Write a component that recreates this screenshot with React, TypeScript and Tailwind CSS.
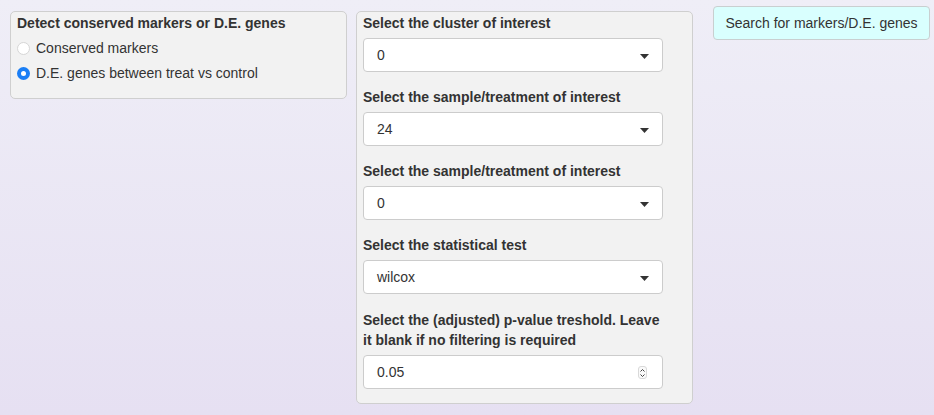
import React from "react";

const font = { fontFamily: '"Liberation Sans", Arial, sans-serif' };

const Caret = () => (
  <svg width="9" height="5" viewBox="0 0 9 5" className="absolute right-[13px] top-[15px]">
    <path d="M0 0 H9 L4.5 5 Z" fill="#333" />
  </svg>
);

const SelectBox = ({ value }: { value: string }) => (
  <div className="relative h-[34px] w-[300px] rounded-[4px] border border-[#cccccc] bg-white pl-[13px] text-[14px] leading-[32px] text-[#333]">
    {value}
    <Caret />
  </div>
);

const Field = ({ label, value }: { label: string; value: string }) => (
  <div className="mb-[15px]">
    <div className="mb-[5px] text-[14px] font-bold leading-5 text-[#333]">{label}</div>
    <SelectBox value={value} />
  </div>
);

const Radio = ({ checked, label }: { checked?: boolean; label: string }) => (
  <div className="flex h-[25px] items-center">
    {checked ? (
      <span className="flex h-[13px] w-[13px] items-center justify-center rounded-full bg-[#1a7ef5]">
        <span className="h-[5px] w-[5px] rounded-full bg-white" />
      </span>
    ) : (
      <span className="h-[13px] w-[13px] rounded-full border border-[#d6d6d6] bg-white" />
    )}
    <span className="ml-[6px] text-[14px] text-[#333]">{label}</span>
  </div>
);

export default function App() {
  return (
    <div
      style={font}
      className="min-h-[415px] w-full bg-gradient-to-b from-[#efeef7] to-[#e6e0f2] pl-[10px] pt-[6px]"
    >
      <div className="flex items-start">
        <div className="mt-[5px] h-[88px] w-[337px] rounded-[5px] border border-[#cfcfcf] bg-[#f2f2f2] px-[6px] pt-[1px]">
          <div className="text-[14px] font-bold leading-5 text-[#333]">
            Detect conserved markers or D.E. genes
          </div>
          <div className="mt-[3px]">
            <Radio label="Conserved markers" />
            <Radio checked label="D.E. genes between treat vs control" />
          </div>
        </div>

        <div className="ml-[9px] mt-[5px] w-[337px] rounded-[5px] border border-[#cfcfcf] bg-[#f2f2f2] pb-[14px] pl-[6px] pt-[1px]">
          <Field label="Select the cluster of interest" value="0" />
          <Field label="Select the sample/treatment of interest" value="24" />
          <Field label="Select the sample/treatment of interest" value="0" />
          <Field label="Select the statistical test" value="wilcox" />
          <div className="w-[300px]">
            <div className="mb-[5px] pt-[1px] text-[14px] font-bold leading-5 text-[#333]">
              Select the (adjusted) p-value treshold. Leave it blank if no filtering is required
            </div>
            <div className="relative h-[34px] w-[300px] rounded-[4px] border border-[#cccccc] bg-white pl-[13px] text-[14px] leading-[32px] text-[#333]">
              0.05
              <div className="absolute right-[15px] top-[10px] flex h-[13px] w-[9px] flex-col items-center justify-center rounded-[3px] border border-[#d9d9d9] bg-[#fafafa]">
                <svg width="7" height="10" viewBox="0 0 7 10">
                  <path d="M1.5 3.5 L3.5 1.5 L5.5 3.5" stroke="#444" strokeWidth="1" fill="none" />
                  <path d="M1.5 6.5 L3.5 8.5 L5.5 6.5" stroke="#444" strokeWidth="1" fill="none" />
                </svg>
              </div>
            </div>
          </div>
        </div>

        <button className="ml-[20px] h-[34px] w-[217px] rounded-[4px] border border-[#c9cfd0] bg-[#d9fffe] text-[14px] text-[#333]">
          Search for markers/D.E. genes
        </button>
      </div>
    </div>
  );
}
